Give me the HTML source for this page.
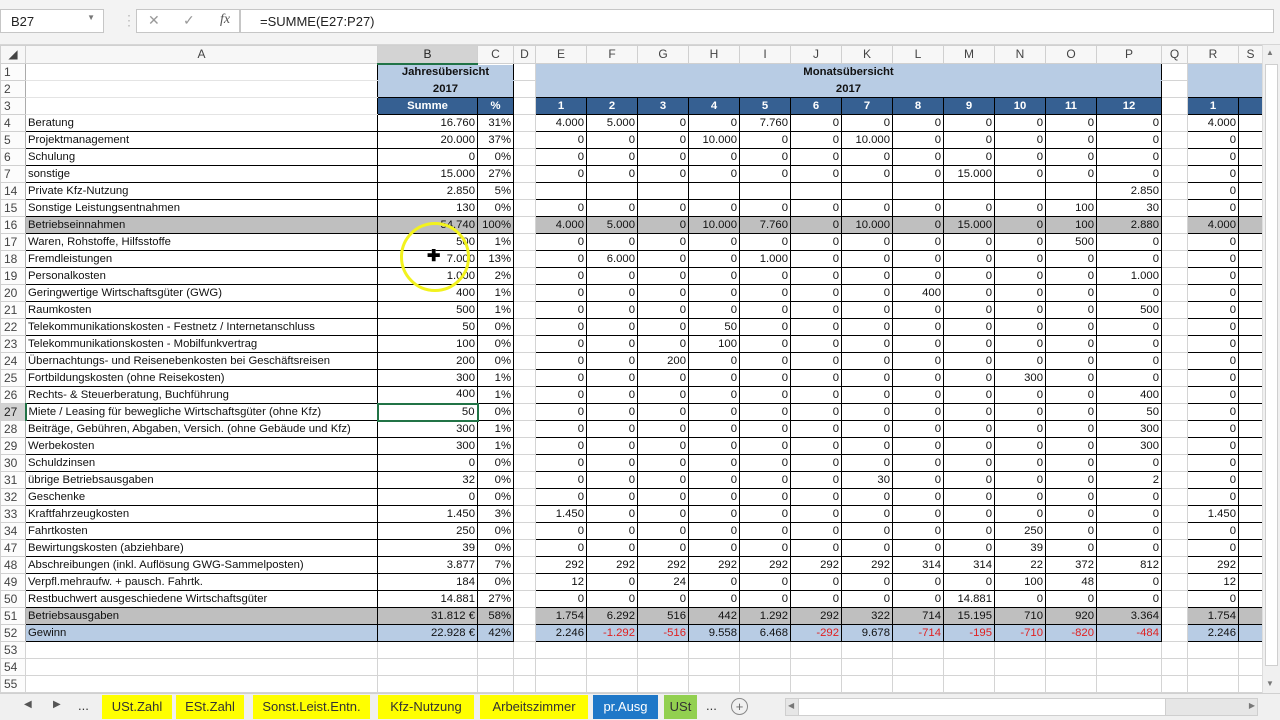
<!DOCTYPE html>
<html><head><meta charset="utf-8"><style>
*{box-sizing:border-box}
body{margin:0;width:1280px;height:720px;overflow:hidden;background:#fff;font-family:"Liberation Sans",sans-serif;position:relative}
.top{position:absolute;left:0;top:0;width:1280px;height:45px;background:#f3f3f3;border-bottom:1px solid #d6d6d6}
.nb{position:absolute;left:0;top:9px;width:104px;height:24px;background:#fff;border:1px solid #c6c6c6;font-size:13px;padding:4px 0 0 10px;color:#222}
.nb span{position:absolute;right:8px;top:3px;font-size:8px;color:#777}
.fb{position:absolute;left:240px;top:9px;width:1034px;height:24px;background:#fff;border:1px solid #c6c6c6;font-size:13px;padding:4px 0 0 19px;color:#222}
.ic{position:absolute;top:12px;font-size:14px;color:#999}
table{border-collapse:collapse;table-layout:fixed;position:absolute;left:0;top:45px;font-size:11.3px}
tr{height:17px}
td{border:1px solid #000;padding:0 2px;white-space:nowrap;overflow:hidden;text-align:right;line-height:15px;color:#111}
td.h{border:1px solid #d0d0d0;border-right:1px solid #ababab;background:#fcfcfc;text-align:left;color:#444;padding-left:3px;font-size:12px}
td.a{text-align:left}
td.g{border-color:#d4d4d4}
td.w{border-top-color:#e4e4e4;border-bottom-color:#e4e4e4;border-left-color:#e4e4e4}
tr.ch td{border:1px solid #d0d0d0;background:#f7f7f7;text-align:center;color:#444;height:18px;font-size:12px}
tr.ch td.sel{background:#d3d3d3;border-bottom:2px solid #217346;color:#222}
.lb{background:#b8cce4;text-align:center;font-weight:bold}
tr.r1 td.lb{border-bottom-color:#b8cce4}
tr.r2 td.lb{border-top-color:#b8cce4}
tr.dk td.k{background:#366092;color:#fff;text-align:center;font-weight:bold}
tr.gr td.k{background:#bfbfbf}
tr.bl td.k{background:#b8cce4}
.r{color:#e02020!important}
tr.e td{border-color:#d4d4d4}
.tabs{position:absolute;left:0;top:693px;width:1280px;height:27px;background:#f0f0f0;border-top:1px solid #d0d0d0;font-size:13px}
.t{position:absolute;top:1px;height:24px;line-height:24px;text-align:center;background:#ffff00;color:#333}
.vs{position:absolute;left:1262px;top:45px;width:18px;height:648px;background:#f0f0f0;border-left:1px solid #ddd}
</style></head><body>
<div class="top">
<div class="nb">B27<span>▼</span></div>
<div class="ic" style="left:122px;color:#bbb">⋮</div>
<div style="position:absolute;left:136px;top:9px;width:104px;height:24px;background:#fff;border:1px solid #c6c6c6"></div>
<div class="ic" style="left:148px">✕</div><div class="ic" style="left:183px">✓</div><div class="ic" style="left:220px;font-style:italic;font-family:'Liberation Serif',serif;color:#555">fx</div>
<div class="fb">=SUMME(E27:P27)</div>
</div>
<table>
<colgroup><col style="width:25px"><col style="width:352px"><col style="width:100px"><col style="width:36px"><col style="width:22px"><col style="width:51px"><col style="width:51px"><col style="width:51px"><col style="width:51px"><col style="width:51px"><col style="width:51px"><col style="width:51px"><col style="width:51px"><col style="width:51px"><col style="width:51px"><col style="width:51px"><col style="width:65px"><col style="width:26px"><col style="width:51px"><col style="width:24px"></colgroup>
<tr class="ch"><td>◢</td><td>A</td><td class="sel">B</td><td>C</td><td>D</td><td>E</td><td>F</td><td>G</td><td>H</td><td>I</td><td>J</td><td>K</td><td>L</td><td>M</td><td>N</td><td>O</td><td>P</td><td>Q</td><td>R</td><td>S</td></tr>
<tr class="r1"><td class="h">1</td><td class="w"></td><td colspan="2" class="lb">Jahresübersicht</td><td class="g"></td><td colspan="12" class="lb">Monatsübersicht</td><td class="g"></td><td class="lb" colspan="2"></td></tr>
<tr class="r2"><td class="h">2</td><td class="w"></td><td colspan="2" class="lb">2017</td><td class="g"></td><td colspan="12" class="lb">2017</td><td class="g"></td><td class="lb" colspan="2"></td></tr>
<tr class="dk"><td class="h">3</td><td class="w"></td><td class="k">Summe</td><td class="k">%</td><td class="g"></td><td class="k">1</td><td class="k">2</td><td class="k">3</td><td class="k">4</td><td class="k">5</td><td class="k">6</td><td class="k">7</td><td class="k">8</td><td class="k">9</td><td class="k">10</td><td class="k">11</td><td class="k">12</td><td class="g"></td><td class="k">1</td><td class="k"></td></tr>
<tr><td class="h">4</td><td class="a">Beratung</td><td>16.760</td><td>31%</td><td class="g"></td><td>4.000</td><td>5.000</td><td>0</td><td>0</td><td>7.760</td><td>0</td><td>0</td><td>0</td><td>0</td><td>0</td><td>0</td><td>0</td><td class="g"></td><td>4.000</td><td></td></tr>
<tr><td class="h">5</td><td class="a">Projektmanagement</td><td>20.000</td><td>37%</td><td class="g"></td><td>0</td><td>0</td><td>0</td><td>10.000</td><td>0</td><td>0</td><td>10.000</td><td>0</td><td>0</td><td>0</td><td>0</td><td>0</td><td class="g"></td><td>0</td><td></td></tr>
<tr><td class="h">6</td><td class="a">Schulung</td><td>0</td><td>0%</td><td class="g"></td><td>0</td><td>0</td><td>0</td><td>0</td><td>0</td><td>0</td><td>0</td><td>0</td><td>0</td><td>0</td><td>0</td><td>0</td><td class="g"></td><td>0</td><td></td></tr>
<tr><td class="h">7</td><td class="a">sonstige</td><td>15.000</td><td>27%</td><td class="g"></td><td>0</td><td>0</td><td>0</td><td>0</td><td>0</td><td>0</td><td>0</td><td>0</td><td>15.000</td><td>0</td><td>0</td><td>0</td><td class="g"></td><td>0</td><td></td></tr>
<tr><td class="h">14</td><td class="a">Private Kfz-Nutzung</td><td>2.850</td><td>5%</td><td class="g"></td><td></td><td></td><td></td><td></td><td></td><td></td><td></td><td></td><td></td><td></td><td></td><td>2.850</td><td class="g"></td><td>0</td><td></td></tr>
<tr><td class="h">15</td><td class="a">Sonstige Leistungsentnahmen</td><td>130</td><td>0%</td><td class="g"></td><td>0</td><td>0</td><td>0</td><td>0</td><td>0</td><td>0</td><td>0</td><td>0</td><td>0</td><td>0</td><td>100</td><td>30</td><td class="g"></td><td>0</td><td></td></tr>
<tr class="gr"><td class="h">16</td><td class="a k">Betriebseinnahmen</td><td class="k">54.740</td><td class="k">100%</td><td class="g"></td><td class="k">4.000</td><td class="k">5.000</td><td class="k">0</td><td class="k">10.000</td><td class="k">7.760</td><td class="k">0</td><td class="k">10.000</td><td class="k">0</td><td class="k">15.000</td><td class="k">0</td><td class="k">100</td><td class="k">2.880</td><td class="g"></td><td class="k">4.000</td><td class="k"></td></tr>
<tr><td class="h">17</td><td class="a">Waren, Rohstoffe, Hilfsstoffe</td><td>500</td><td>1%</td><td class="g"></td><td>0</td><td>0</td><td>0</td><td>0</td><td>0</td><td>0</td><td>0</td><td>0</td><td>0</td><td>0</td><td>500</td><td>0</td><td class="g"></td><td>0</td><td></td></tr>
<tr><td class="h">18</td><td class="a">Fremdleistungen</td><td>7.000</td><td>13%</td><td class="g"></td><td>0</td><td>6.000</td><td>0</td><td>0</td><td>1.000</td><td>0</td><td>0</td><td>0</td><td>0</td><td>0</td><td>0</td><td>0</td><td class="g"></td><td>0</td><td></td></tr>
<tr><td class="h">19</td><td class="a">Personalkosten</td><td>1.000</td><td>2%</td><td class="g"></td><td>0</td><td>0</td><td>0</td><td>0</td><td>0</td><td>0</td><td>0</td><td>0</td><td>0</td><td>0</td><td>0</td><td>1.000</td><td class="g"></td><td>0</td><td></td></tr>
<tr><td class="h">20</td><td class="a">Geringwertige Wirtschaftsgüter (GWG)</td><td>400</td><td>1%</td><td class="g"></td><td>0</td><td>0</td><td>0</td><td>0</td><td>0</td><td>0</td><td>0</td><td>400</td><td>0</td><td>0</td><td>0</td><td>0</td><td class="g"></td><td>0</td><td></td></tr>
<tr><td class="h">21</td><td class="a">Raumkosten</td><td>500</td><td>1%</td><td class="g"></td><td>0</td><td>0</td><td>0</td><td>0</td><td>0</td><td>0</td><td>0</td><td>0</td><td>0</td><td>0</td><td>0</td><td>500</td><td class="g"></td><td>0</td><td></td></tr>
<tr><td class="h">22</td><td class="a">Telekommunikationskosten - Festnetz / Internetanschluss</td><td>50</td><td>0%</td><td class="g"></td><td>0</td><td>0</td><td>0</td><td>50</td><td>0</td><td>0</td><td>0</td><td>0</td><td>0</td><td>0</td><td>0</td><td>0</td><td class="g"></td><td>0</td><td></td></tr>
<tr><td class="h">23</td><td class="a">Telekommunikationskosten - Mobilfunkvertrag</td><td>100</td><td>0%</td><td class="g"></td><td>0</td><td>0</td><td>0</td><td>100</td><td>0</td><td>0</td><td>0</td><td>0</td><td>0</td><td>0</td><td>0</td><td>0</td><td class="g"></td><td>0</td><td></td></tr>
<tr><td class="h">24</td><td class="a">Übernachtungs- und Reisenebenkosten bei Geschäftsreisen</td><td>200</td><td>0%</td><td class="g"></td><td>0</td><td>0</td><td>200</td><td>0</td><td>0</td><td>0</td><td>0</td><td>0</td><td>0</td><td>0</td><td>0</td><td>0</td><td class="g"></td><td>0</td><td></td></tr>
<tr><td class="h">25</td><td class="a">Fortbildungskosten (ohne Reisekosten)</td><td>300</td><td>1%</td><td class="g"></td><td>0</td><td>0</td><td>0</td><td>0</td><td>0</td><td>0</td><td>0</td><td>0</td><td>0</td><td>300</td><td>0</td><td>0</td><td class="g"></td><td>0</td><td></td></tr>
<tr><td class="h">26</td><td class="a">Rechts- &amp; Steuerberatung, Buchführung</td><td>400</td><td>1%</td><td class="g"></td><td>0</td><td>0</td><td>0</td><td>0</td><td>0</td><td>0</td><td>0</td><td>0</td><td>0</td><td>0</td><td>0</td><td>400</td><td class="g"></td><td>0</td><td></td></tr>
<tr><td class="h" style="background:#d3d3d3;border-right:2px solid #217346;color:#222">27</td><td class="a">Miete / Leasing für bewegliche Wirtschaftsgüter (ohne Kfz)</td><td style="border:2px solid #217346">50</td><td>0%</td><td class="g"></td><td>0</td><td>0</td><td>0</td><td>0</td><td>0</td><td>0</td><td>0</td><td>0</td><td>0</td><td>0</td><td>0</td><td>50</td><td class="g"></td><td>0</td><td></td></tr>
<tr><td class="h">28</td><td class="a">Beiträge, Gebühren, Abgaben, Versich. (ohne Gebäude und Kfz)</td><td>300</td><td>1%</td><td class="g"></td><td>0</td><td>0</td><td>0</td><td>0</td><td>0</td><td>0</td><td>0</td><td>0</td><td>0</td><td>0</td><td>0</td><td>300</td><td class="g"></td><td>0</td><td></td></tr>
<tr><td class="h">29</td><td class="a">Werbekosten</td><td>300</td><td>1%</td><td class="g"></td><td>0</td><td>0</td><td>0</td><td>0</td><td>0</td><td>0</td><td>0</td><td>0</td><td>0</td><td>0</td><td>0</td><td>300</td><td class="g"></td><td>0</td><td></td></tr>
<tr><td class="h">30</td><td class="a">Schuldzinsen</td><td>0</td><td>0%</td><td class="g"></td><td>0</td><td>0</td><td>0</td><td>0</td><td>0</td><td>0</td><td>0</td><td>0</td><td>0</td><td>0</td><td>0</td><td>0</td><td class="g"></td><td>0</td><td></td></tr>
<tr><td class="h">31</td><td class="a">übrige Betriebsausgaben</td><td>32</td><td>0%</td><td class="g"></td><td>0</td><td>0</td><td>0</td><td>0</td><td>0</td><td>0</td><td>30</td><td>0</td><td>0</td><td>0</td><td>0</td><td>2</td><td class="g"></td><td>0</td><td></td></tr>
<tr><td class="h">32</td><td class="a">Geschenke</td><td>0</td><td>0%</td><td class="g"></td><td>0</td><td>0</td><td>0</td><td>0</td><td>0</td><td>0</td><td>0</td><td>0</td><td>0</td><td>0</td><td>0</td><td>0</td><td class="g"></td><td>0</td><td></td></tr>
<tr><td class="h">33</td><td class="a">Kraftfahrzeugkosten</td><td>1.450</td><td>3%</td><td class="g"></td><td>1.450</td><td>0</td><td>0</td><td>0</td><td>0</td><td>0</td><td>0</td><td>0</td><td>0</td><td>0</td><td>0</td><td>0</td><td class="g"></td><td>1.450</td><td></td></tr>
<tr><td class="h">34</td><td class="a">Fahrtkosten</td><td>250</td><td>0%</td><td class="g"></td><td>0</td><td>0</td><td>0</td><td>0</td><td>0</td><td>0</td><td>0</td><td>0</td><td>0</td><td>250</td><td>0</td><td>0</td><td class="g"></td><td>0</td><td></td></tr>
<tr><td class="h">47</td><td class="a">Bewirtungskosten (abziehbare)</td><td>39</td><td>0%</td><td class="g"></td><td>0</td><td>0</td><td>0</td><td>0</td><td>0</td><td>0</td><td>0</td><td>0</td><td>0</td><td>39</td><td>0</td><td>0</td><td class="g"></td><td>0</td><td></td></tr>
<tr><td class="h">48</td><td class="a">Abschreibungen (inkl. Auflösung GWG-Sammelposten)</td><td>3.877</td><td>7%</td><td class="g"></td><td>292</td><td>292</td><td>292</td><td>292</td><td>292</td><td>292</td><td>292</td><td>314</td><td>314</td><td>22</td><td>372</td><td>812</td><td class="g"></td><td>292</td><td></td></tr>
<tr><td class="h">49</td><td class="a">Verpfl.mehraufw. + pausch. Fahrtk.</td><td>184</td><td>0%</td><td class="g"></td><td>12</td><td>0</td><td>24</td><td>0</td><td>0</td><td>0</td><td>0</td><td>0</td><td>0</td><td>100</td><td>48</td><td>0</td><td class="g"></td><td>12</td><td></td></tr>
<tr><td class="h">50</td><td class="a">Restbuchwert ausgeschiedene Wirtschaftsgüter</td><td>14.881</td><td>27%</td><td class="g"></td><td>0</td><td>0</td><td>0</td><td>0</td><td>0</td><td>0</td><td>0</td><td>0</td><td>14.881</td><td>0</td><td>0</td><td>0</td><td class="g"></td><td>0</td><td></td></tr>
<tr class="gr"><td class="h">51</td><td class="a k">Betriebsausgaben</td><td class="k">31.812 €</td><td class="k">58%</td><td class="g"></td><td class="k">1.754</td><td class="k">6.292</td><td class="k">516</td><td class="k">442</td><td class="k">1.292</td><td class="k">292</td><td class="k">322</td><td class="k">714</td><td class="k">15.195</td><td class="k">710</td><td class="k">920</td><td class="k">3.364</td><td class="g"></td><td class="k">1.754</td><td class="k"></td></tr>
<tr class="bl"><td class="h">52</td><td class="a k">Gewinn</td><td class="k">22.928 €</td><td class="k">42%</td><td class="g"></td><td class="k">2.246</td><td class="k r">-1.292</td><td class="k r">-516</td><td class="k">9.558</td><td class="k">6.468</td><td class="k r">-292</td><td class="k">9.678</td><td class="k r">-714</td><td class="k r">-195</td><td class="k r">-710</td><td class="k r">-820</td><td class="k r">-484</td><td class="g"></td><td class="k">2.246</td><td class="k"></td></tr>
<tr class="e"><td class="h">53</td><td></td><td></td><td></td><td></td><td></td><td></td><td></td><td></td><td></td><td></td><td></td><td></td><td></td><td></td><td></td><td></td><td></td><td></td><td></td></tr>
<tr class="e"><td class="h">54</td><td></td><td></td><td></td><td></td><td></td><td></td><td></td><td></td><td></td><td></td><td></td><td></td><td></td><td></td><td></td><td></td><td></td><td></td><td></td></tr>
<tr class="e"><td class="h">55</td><td></td><td></td><td></td><td></td><td></td><td></td><td></td><td></td><td></td><td></td><td></td><td></td><td></td><td></td><td></td><td></td><td></td><td></td><td></td></tr>
</table>
<div style="position:absolute;left:400px;top:222px;width:70px;height:70px;border:3px solid #f2f21e;border-radius:50%"></div>
<div style="position:absolute;left:427px;top:246px;font-size:16px;font-weight:bold;color:#000;text-shadow:0 0 1px #fff">✚</div>
<div class="vs"><div style="position:absolute;left:3px;top:3px;font-size:8px;color:#777">▲</div><div style="position:absolute;left:2px;top:19px;width:13px;height:602px;background:#fff;border:1px solid #cfcfcf"></div><div style="position:absolute;left:3px;top:634px;font-size:8px;color:#777">▼</div></div>
<div class="tabs">
<div style="position:absolute;left:24px;top:5px;font-size:10px;color:#555">◀</div>
<div style="position:absolute;left:53px;top:5px;font-size:10px;color:#555">▶</div>
<div style="position:absolute;left:78px;top:4px;color:#333">...</div>
<div class="t" style="left:102px;width:70px">USt.Zahl</div>
<div class="t" style="left:176px;width:68px">ESt.Zahl</div>
<div class="t" style="left:253px;width:117px">Sonst.Leist.Entn.</div>
<div class="t" style="left:378px;width:96px">Kfz-Nutzung</div>
<div class="t" style="left:480px;width:108px">Arbeitszimmer</div>
<div class="t" style="left:593px;width:65px;background:#1f78c8;color:#fff">pr.Ausg</div>
<div class="t" style="left:664px;width:33px;background:#92d050">USt</div>
<div style="position:absolute;left:706px;top:4px;color:#333">...</div>
<div style="position:absolute;left:731px;top:4px;width:17px;height:17px;border:1px solid #888;border-radius:50%;text-align:center;line-height:15px;color:#666">+</div>
<div style="position:absolute;left:785px;top:4px;width:473px;height:18px;background:#e6e6e6;border:1px solid #cfcfcf"><div style="position:absolute;left:12px;top:0;width:368px;height:16px;background:#fff;border-right:1px solid #cfcfcf;border-left:1px solid #cfcfcf"></div><div style="position:absolute;left:2px;top:2px;font-size:8px;color:#777">◀</div><div style="position:absolute;right:2px;top:2px;font-size:8px;color:#777">▶</div></div>
</div>
</body></html>
